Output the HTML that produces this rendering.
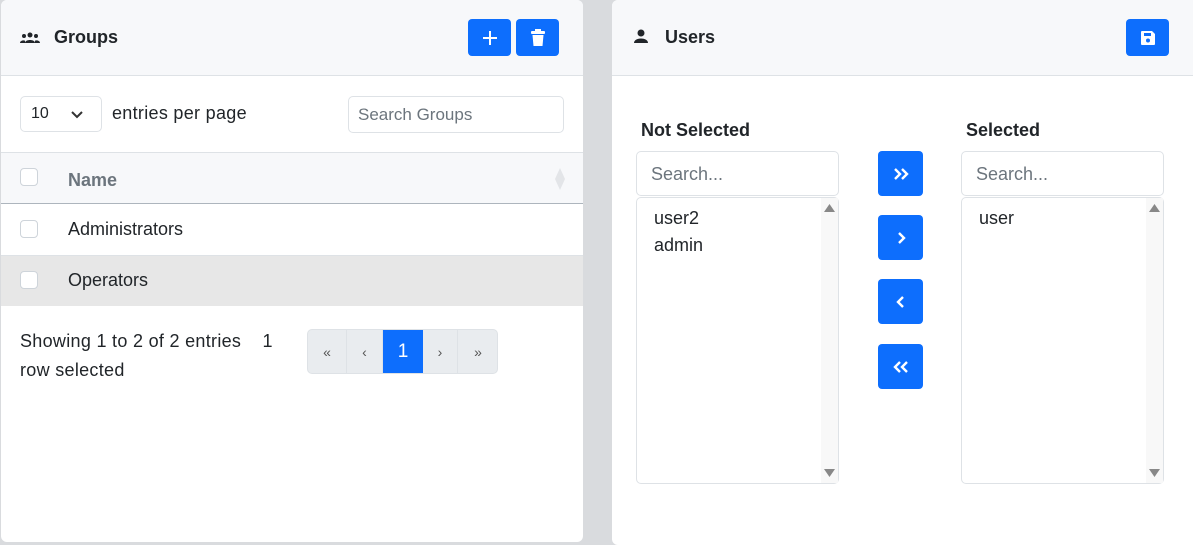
<!DOCTYPE html>
<html><head><style>
*{box-sizing:border-box;margin:0;padding:0}
body{width:1193px;height:545px;background:#d9dbde;font-family:"Liberation Sans",sans-serif;color:#212529;position:relative;overflow:hidden;font-size:18px}
.card{position:absolute;background:#fff;border-radius:6px;overflow:hidden}
.hdr{position:absolute;left:0;right:0;top:0;height:76px;background:#f7f8fa;border-bottom:1px solid #dee2e6}
.abs{position:absolute}
.btn{position:absolute;background:#0d6efd;border-radius:4px;display:flex;align-items:center;justify-content:center}
.inp{position:absolute;border:1px solid #dee2e6;border-radius:5px;background:#fff;color:#6c757d}
.cb{position:absolute;width:18px;height:18px;border:1px solid #ced4da;border-radius:4px;background:#fff}
.pg{position:absolute;top:0;height:43px;display:flex;align-items:center;justify-content:center;font-size:14px;color:#555;border-right:1px solid #dee2e6}
</style></head><body>
<div class="card" style="left:1px;top:0;width:582px;height:542px">
 <div class="hdr">
  <svg class="abs" style="left:19px;top:32px" width="20" height="12" viewBox="0 0 20 12"><circle cx="10" cy="3" r="2.5" fill="#212529"/><circle cx="4" cy="4" r="2" fill="#212529"/><circle cx="16" cy="4" r="2" fill="#212529"/><path d="M5 11c0-4 10-4 10 0z M0 11c0-3 5-3 5-2v2z M15 9c0-1 5-1 5 2h-5z" fill="#212529"/></svg>
  <div class="abs" style="left:53px;top:27px;font-weight:bold;font-size:18px">Groups</div>
  <div class="btn" style="left:467px;top:19px;width:43px;height:37px"><svg width="16" height="16"><path d="M8 1v14M1 8h14" stroke="#fff" stroke-width="2"/></svg></div>
  <div class="btn" style="left:515px;top:19px;width:43px;height:37px"><svg width="14" height="18" viewBox="0 0 14 18"><rect x="0" y="2" width="14" height="3" rx="1" fill="#fff"/><rect x="4" y="0" width="6" height="3" fill="#fff"/><path d="M1.5 6h11l-1 11h-9z" fill="#fff"/></svg></div>
 </div>
 <div class="inp" style="left:19px;top:96px;width:82px;height:36px;color:#212529;font-size:16px;padding:8px 10px">10<svg class="abs" style="left:50px;top:14px" width="12" height="8"><path d="M1 1l5 5 5-5" stroke="#333" stroke-width="2" fill="none"/></svg></div>
 <div class="abs" style="left:111px;top:103px;letter-spacing:0.3px">entries per page</div>
 <div class="inp" style="left:347px;top:96px;width:216px;height:37px;font-size:17px;padding:8px 9px">Search Groups</div>
 <div class="abs" style="left:0;right:0;top:152px;height:52px;background:#f7f8fa;border-top:1px solid #dee2e6;border-bottom:1px solid #adb5bd"></div>
 <div class="cb" style="left:19px;top:168px"></div>
 <div class="abs" style="left:67px;top:170px;font-weight:bold;color:#6c757d">Name</div>
 <svg class="abs" style="left:553px;top:168px" width="12" height="22"><path d="M6 0l5 11-5 11-5-11z" fill="#e3e5e8"/></svg>
 <div class="cb" style="left:19px;top:220px"></div>
 <div class="abs" style="left:67px;top:219px">Administrators</div>
 <div class="abs" style="left:0;right:0;top:255px;height:51px;background:#e7e7e7;border-top:1px solid #dee2e6"></div>
 <div class="cb" style="left:19px;top:271px"></div>
 <div class="abs" style="left:67px;top:270px">Operators</div>
 <div class="abs" style="left:19px;top:327px;line-height:29px;width:280px;letter-spacing:0.3px">Showing 1 to 2 of 2 entries &nbsp;&nbsp; 1<br>row selected</div>
 <div class="abs" style="left:306px;top:329px;width:191px;height:45px;background:#e9ecef;border:1px solid #dee2e6;border-radius:5px;overflow:hidden">
  <div class="pg" style="left:0;width:39px">«</div><div class="pg" style="left:39px;width:36px">‹</div>
  <div class="pg" style="left:75px;width:40px;background:#0d6efd;color:#fff;font-size:19px;border:none">1</div>
  <div class="pg" style="left:115px;width:35px">›</div><div class="pg" style="left:150px;width:40px;border:none">»</div>
 </div>
</div>
<div class="card" style="left:612px;top:0;width:590px;height:545px">
 <div class="hdr">
  <svg class="abs" style="left:22px;top:29px" width="14" height="14"><circle cx="7" cy="4" r="3.5" fill="#212529"/><path d="M0 14c0-6 14-6 14 0z" fill="#212529"/></svg>
  <div class="abs" style="left:53px;top:27px;font-weight:bold;font-size:18px">Users</div>
  <div class="btn" style="left:514px;top:19px;width:43px;height:37px"><svg width="16" height="16" viewBox="0 0 16 16"><path d="M1 2a1 1 0 011-1h10l3 3v10a1 1 0 01-1 1H2a1 1 0 01-1-1z" fill="#fff"/><rect x="4" y="3" width="7" height="3" fill="#0d6efd"/><circle cx="8" cy="10.5" r="2" fill="#0d6efd"/></svg></div>
 </div>
 <div class="abs" style="left:29px;top:120px;font-weight:bold;font-size:18px">Not Selected</div>
 <div class="abs" style="left:354px;top:120px;font-weight:bold;font-size:18px">Selected</div>
 <div class="inp" style="left:24px;top:151px;width:203px;height:45px;padding:12px 14px">Search...</div>
 <div class="inp" style="left:349px;top:151px;width:203px;height:45px;padding:12px 14px">Search...</div>
 <div class="inp" style="left:24px;top:197px;width:203px;height:287px;color:#212529;padding:7px 17px;line-height:27px">user2<br>admin<div class="abs" style="right:0;top:0;width:17px;height:100%;background:#f8f8f8"></div><svg class="abs" style="right:3px;top:6px" width="11" height="8"><path d="M5.5 0l5.5 8H0z" fill="#888"/></svg><svg class="abs" style="right:3px;bottom:6px" width="11" height="8"><path d="M5.5 8L11 0H0z" fill="#888"/></svg></div>
 <div class="inp" style="left:349px;top:197px;width:203px;height:287px;color:#212529;padding:7px 17px;line-height:27px">user<div class="abs" style="right:0;top:0;width:17px;height:100%;background:#f8f8f8"></div><svg class="abs" style="right:3px;top:6px" width="11" height="8"><path d="M5.5 0l5.5 8H0z" fill="#888"/></svg><svg class="abs" style="right:3px;bottom:6px" width="11" height="8"><path d="M5.5 8L11 0H0z" fill="#888"/></svg></div>
 <div class="btn" style="left:266px;top:151px;width:45px;height:45px"><svg width="16" height="14"><path d="M2 2l5 5-5 5M9 2l5 5-5 5" stroke="#fff" stroke-width="2.4" fill="none"/></svg></div>
 <div class="btn" style="left:266px;top:215px;width:45px;height:45px"><svg width="10" height="14"><path d="M3 2l5 5-5 5" stroke="#fff" stroke-width="2.4" fill="none"/></svg></div>
 <div class="btn" style="left:266px;top:279px;width:45px;height:45px"><svg width="10" height="14"><path d="M7 2L2 7l5 5" stroke="#fff" stroke-width="2.4" fill="none"/></svg></div>
 <div class="btn" style="left:266px;top:344px;width:45px;height:45px"><svg width="16" height="14"><path d="M7 2L2 7l5 5M14 2L9 7l5 5" stroke="#fff" stroke-width="2.4" fill="none"/></svg></div>
</div>
</body></html>
